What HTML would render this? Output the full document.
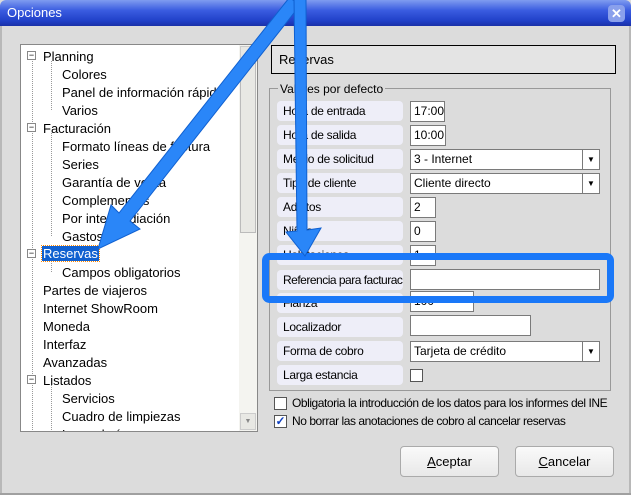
<!DOCTYPE html>
<html><head><style>
*{box-sizing:border-box;margin:0;padding:0}
body{width:631px;height:495px;overflow:hidden;background:#dcdcdc;font-family:"Liberation Sans",sans-serif;position:relative}
.abs{position:absolute}
.title{left:0;top:0;width:631px;height:26px;background:linear-gradient(#7f9cf0,#3a5ce0 40%,#2040c8 80%,#1a30a8);border-radius:6px 6px 0 0}
.title span{position:absolute;left:7px;top:5px;color:#fff;font-size:13px}
.close{right:6px;top:5px;width:17px;height:17px;border-radius:4px;background:#8aa0ec;color:#fff;font-size:13px;font-weight:bold;text-align:center;line-height:17px}
.tree{left:20px;top:44px;width:238px;height:388px;background:#fff;border:1px solid #888;overflow:hidden}
.t{position:absolute;font-size:13px;color:#000;white-space:nowrap;line-height:15px}
.pm{position:absolute;width:9px;height:9px;border:1px solid #888;background:#fff;font-size:9px;line-height:6px;text-align:center}
.sb{position:absolute;left:218px;top:0;width:18px;height:386px;background:#f4f4f0}
.lbl{position:absolute;left:277px;width:126px;height:20px;background:#eeeef8;border-radius:4px;font-size:12px;line-height:20px;padding-left:6px;white-space:nowrap;letter-spacing:-0.3px;overflow:hidden}
.in{position:absolute;left:410px;height:21px;background:#fff;border:1px solid #7a7a7a;font-size:12px;line-height:19px;padding-left:3px;white-space:nowrap}
.dd{position:absolute;right:0;top:0;width:17px;height:19px;border-left:1px solid #7a7a7a;font-size:8px;text-align:center;line-height:19px}
.cb{position:absolute;width:13px;height:13px;border:1px solid #555;background:#fff}
.ct{position:absolute;left:292px;font-size:12px;white-space:nowrap;letter-spacing:-0.45px}
.btn{position:absolute;top:446px;width:99px;height:31px;border:1px solid #aaa;border-radius:4px;background:linear-gradient(#fafafa,#e8e8e8);font-size:13px;text-align:center;line-height:29px}
</style></head><body>
<div class="abs title"><span>Opciones</span></div>
<div class="abs close">✕</div>
<div class="abs" style="left:0;top:26px;width:2px;height:469px;background:#b8b8b8"></div>
<div class="abs" style="right:0;top:26px;width:2px;height:469px;background:#b8b8b8"></div>
<div class="abs" style="left:0;bottom:0;width:631px;height:2px;background:#a0a0a0"></div>

<div class="abs tree">
<div class="sb"><div style="position:absolute;left:1px;top:1px;width:16px;height:17px;background:#e8e8e4;border:1px solid #ccc;font-size:7px;text-align:center;color:#888;line-height:15px">▲</div><div style="position:absolute;left:1px;top:18px;width:16px;height:170px;background:#e8e8e4;border:1px solid #bbb"></div><div style="position:absolute;left:1px;top:368px;width:16px;height:17px;background:#e8e8e4;border:1px solid #ccc;font-size:7px;text-align:center;color:#888;line-height:15px">▼</div></div>
<svg class="abs" style="left:0;top:0" width="218" height="388"><g stroke="#999" stroke-dasharray="1 1" fill="none">
<line x1="11.5" y1="16" x2="11.5" y2="388"/><line x1="30.5" y1="16" x2="30.5" y2="65"/><line x1="30.5" y1="88" x2="30.5" y2="191"/><line x1="30.5" y1="214" x2="30.5" y2="227"/><line x1="30.5" y1="340" x2="30.5" y2="388"/>
</g></svg>
<div class="pm" style="left:6px;top:6px">−</div><div class="t" style="left:22px;top:4px">Planning</div>
<div class="t" style="left:41px;top:22px">Colores</div>
<div class="t" style="left:41px;top:40px">Panel de información rápida</div>
<div class="t" style="left:41px;top:58px">Varios</div>
<div class="pm" style="left:6px;top:78px">−</div><div class="t" style="left:22px;top:76px">Facturación</div>
<div class="t" style="left:41px;top:94px">Formato líneas de factura</div>
<div class="t" style="left:41px;top:112px">Series</div>
<div class="t" style="left:41px;top:130px">Garantía de venta</div>
<div class="t" style="left:41px;top:148px">Complementos</div>
<div class="t" style="left:41px;top:166px">Por intermediación</div>
<div class="t" style="left:41px;top:184px">Gastos</div>
<div class="pm" style="left:6px;top:204px">−</div><div class="t" style="left:21px;top:201px;background:#1060d0;color:#fff;padding:0 1px;outline:1px dotted #f80">Reservas</div>
<div class="t" style="left:41px;top:220px">Campos obligatorios</div>
<div class="t" style="left:22px;top:238px">Partes de viajeros</div>
<div class="t" style="left:22px;top:256px">Internet ShowRoom</div>
<div class="t" style="left:22px;top:274px">Moneda</div>
<div class="t" style="left:22px;top:292px">Interfaz</div>
<div class="t" style="left:22px;top:310px">Avanzadas</div>
<div class="pm" style="left:6px;top:330px">−</div><div class="t" style="left:22px;top:328px">Listados</div>
<div class="t" style="left:41px;top:346px">Servicios</div>
<div class="t" style="left:41px;top:364px">Cuadro de limpiezas</div>
<div class="t" style="left:41px;top:382px">Lavandería</div>
</div>

<div class="abs" style="left:271px;top:45px;width:345px;height:29px;background:#e4e4e4;border:1px solid #000;font-size:13px;line-height:27px;padding-left:7px">Reservas</div>
<div class="abs" style="left:269px;top:88px;width:342px;height:303px;border:1px solid #999"></div>
<div class="abs" style="left:278px;top:82px;background:#dcdcdc;font-size:12px;padding:0 2px">Valores por defecto</div>

<div class="lbl" style="top:101px">Hora de entrada</div><div class="in" style="top:101px;width:35px">17:00</div>
<div class="lbl" style="top:125px">Hora de salida</div><div class="in" style="top:125px;width:36px">10:00</div>
<div class="lbl" style="top:149px">Medio de solicitud</div><div class="in" style="top:149px;width:190px">3 - Internet<div class="dd">▼</div></div>
<div class="lbl" style="top:173px">Tipo de cliente</div><div class="in" style="top:173px;width:190px">Cliente directo<div class="dd">▼</div></div>
<div class="lbl" style="top:197px">Adultos</div><div class="in" style="top:197px;width:26px">2</div>
<div class="lbl" style="top:221px">Niños</div><div class="in" style="top:221px;width:26px">0</div>
<div class="lbl" style="top:245px">Habitaciones</div><div class="in" style="top:245px;width:26px">1</div>
<div class="lbl" style="top:270px;letter-spacing:-0.5px">Referencia para facturac.</div><div class="in" style="top:269px;width:190px"></div>
<div class="lbl" style="top:293px">Fianza</div><div class="in" style="top:291px;width:64px">100</div>
<div class="lbl" style="top:317px">Localizador</div><div class="in" style="top:315px;width:121px"></div>
<div class="lbl" style="top:341px">Forma de cobro</div><div class="in" style="top:341px;width:190px">Tarjeta de crédito<div class="dd">▼</div></div>
<div class="lbl" style="top:365px">Larga estancia</div><div class="cb" style="left:410px;top:369px"></div>

<div class="cb" style="left:274px;top:397px"></div><div class="ct" style="top:396px">Obligatoria la introducción de los datos para los informes del INE</div>
<div class="cb" style="left:274px;top:415px;color:#1040c0;font-size:12px;line-height:11px;text-align:center;font-weight:bold">✓</div><div class="ct" style="top:414px">No borrar las anotaciones de cobro al cancelar reservas</div>

<div class="btn" style="left:400px"><u>A</u>ceptar</div>
<div class="btn" style="left:515px"><u>C</u>ancelar</div>

<svg class="abs" style="left:0;top:0" width="631" height="495">
<rect x="265.5" y="256.5" width="345" height="43" rx="4" fill="none" stroke="#1a78f8" stroke-width="7"/>
<g fill="#2a86f8" stroke="#1060d0" stroke-width="1">
<polygon points="289,-2 301,4 130,221 140,229 98,249 111,205 119,213"/>
<polygon points="294,-2 306,-2 307,230 321,228 305,256 286,232 297,231"/>
</g>
</svg>
</body></html>
